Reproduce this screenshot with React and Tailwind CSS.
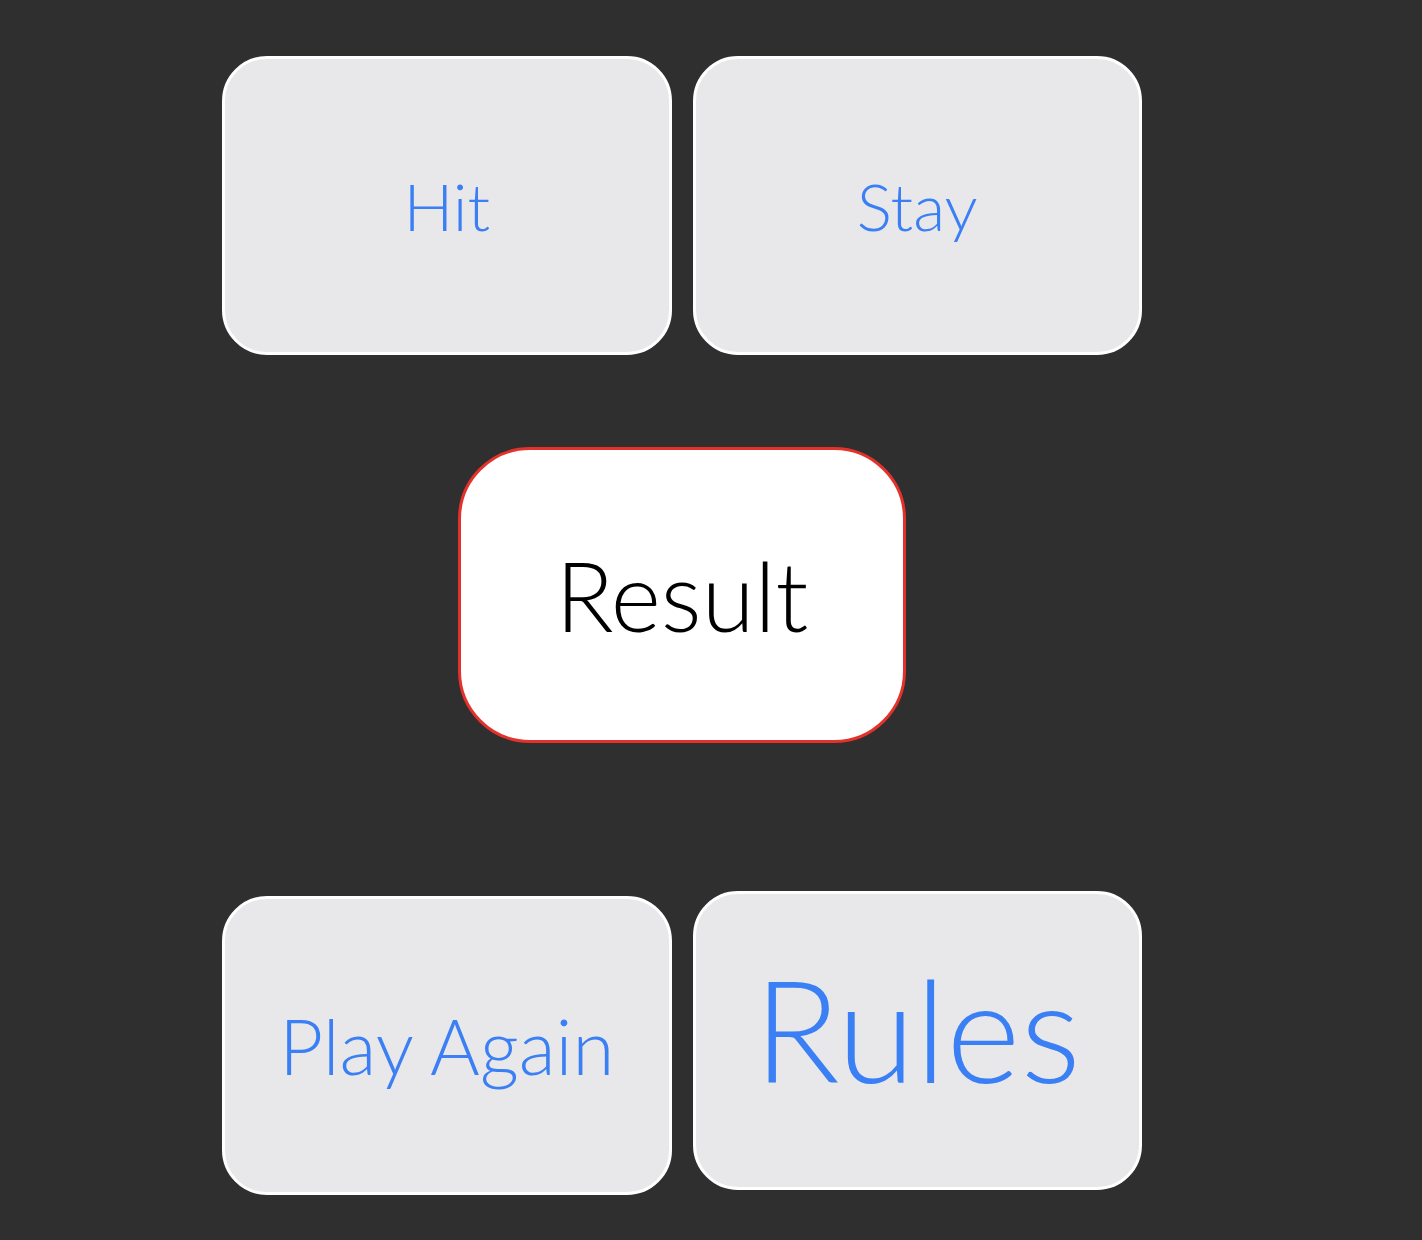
export default function App() {
  const btn =
    'w-[450px] h-[299px] rounded-[45px] border-[3px] border-white bg-[#e8e8ea] text-[#3b7ff5] font-light flex items-center justify-center leading-none';

  return (
    <div className="min-h-[1240px] bg-[#2f2f2f] pt-[56px] font-['Lato',sans-serif]">
      <div className="ml-[222px] w-[920px] flex flex-col">
        {/* Actions */}
        <div className="flex gap-[21px]">
          <button className={`${btn} text-[66px]`}>Hit</button>
          <button className={`${btn} text-[66px]`}>Stay</button>
        </div>

        {/* Result */}
        <div className="mt-[92px] flex justify-center">
          <div className="w-[448px] h-[296px] rounded-[72px] border-[3px] border-[#e3322b] bg-white text-black font-light text-[96px] leading-none flex items-center justify-center">
            Result
          </div>
        </div>

        {/* Bottom */}
        <div className="mt-[148px] flex items-start gap-[21px]">
          <button className={`${btn} mt-[5px] text-[76px]`}>Play Again</button>
          <button className={`${btn} h-[298px] pb-[26px] text-[142px]`}>Rules</button>
        </div>
      </div>
    </div>
  );
}
